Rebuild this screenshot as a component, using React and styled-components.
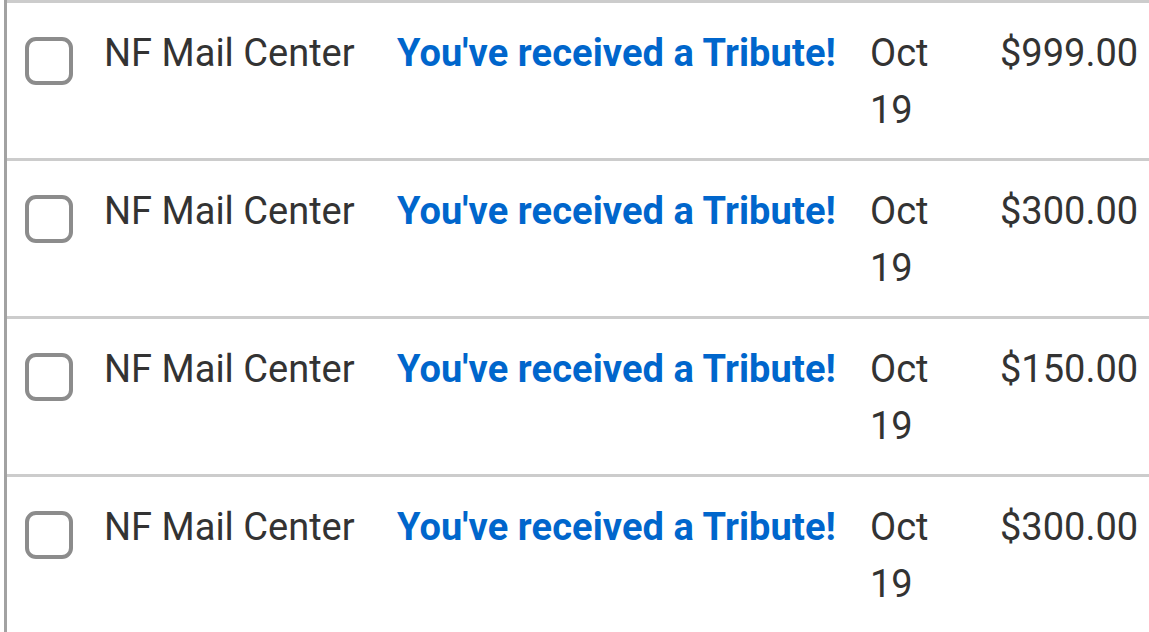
import React from "react";
import styled, { createGlobalStyle } from "styled-components";

const Global = createGlobalStyle`
  html, body { margin: 0; padding: 0; background: #fff; }
  body { font-family: Roboto, "Noto Sans", Arial, sans-serif; }
`;

const Page = styled.div`
  padding-left: 4px;
  width: 1149px;
  height: 632px;
  overflow: hidden;
  box-sizing: border-box;
`;

const List = styled.div`
  border-left: 3px solid #a2a2a2;
  min-height: 632px;
`;

const Row = styled.div`
  display: grid;
  grid-template-columns: 48px 324px 473px 130px auto;
  border-top: 3px solid #cccccc;
  padding: 22px 0 19px 18px;
  font-size: 38px;
  line-height: 57px;
  color: #333;
  white-space: nowrap;
`;

const Check = styled.span`
  display: block;
  width: 48px;
  height: 48px;
  margin-top: 12px;
  box-sizing: border-box;
  border: 4px solid #8c8c8c;
  border-radius: 11px;
  background: #fff;
`;

const Sender = styled.div`
  padding-left: 31px;
  color: #333;
`;

const Subject = styled.a`
  color: #0066cc;
  font-weight: 700;
  text-decoration: none;
  letter-spacing: 0.1px;
  white-space: nowrap;
`;

const DateCell = styled.div`
  width: 90px;
  white-space: normal;
`;

const Amount = styled.div`
  white-space: nowrap;
`;

const rows = ["$999.00", "$300.00", "$150.00", "$300.00"];

export default function App() {
  return (
    <Page>
      <Global />
      <List>
        {rows.map((amt, i) => (
          <Row key={i}>
            <Check />
            <Sender>NF Mail Center</Sender>
            <div>
              <Subject href="#">You've received a Tribute!</Subject>
            </div>
            <DateCell>Oct 19</DateCell>
            <Amount>{amt}</Amount>
          </Row>
        ))}
      </List>
    </Page>
  );
}
